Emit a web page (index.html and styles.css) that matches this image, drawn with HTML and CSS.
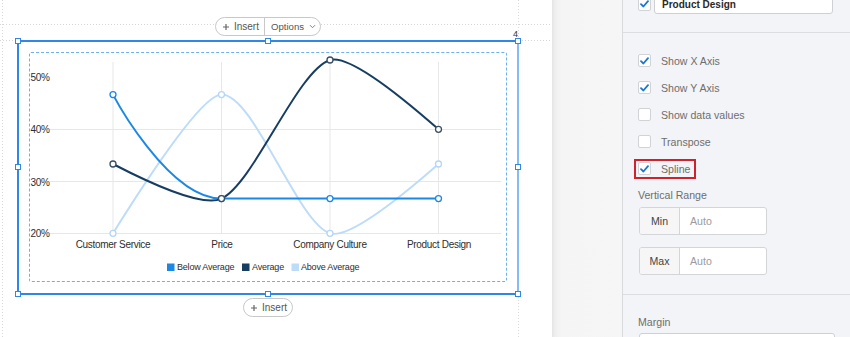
FILE: index.html
```html
<!DOCTYPE html>
<html>
<head>
<meta charset="utf-8">
<title>Chart editor</title>
<link rel="stylesheet" href="styles.css">
</head>
<body>
<div class="app">
  <main class="canvas">
    <div class="pill-row pill-row-top">
      <div class="pill">
        <span class="pill-seg"><svg class="plus" width="6" height="6" viewBox="0 0 6 6"><path d="M3 0v6M0 3h6"/></svg>Insert</span>
        <span class="pill-seg pill-seg-split">Options<svg class="chev" width="7" height="5" viewBox="0 0 7 5"><path d="M1 1.2l2.5 2.5 2.5-2.5"/></svg></span>
      </div>
    </div>
    <div class="selection">
      <span class="handle h-tl"></span><span class="handle h-tc"></span><span class="handle h-tr"></span>
      <span class="handle h-ml"></span><span class="handle h-mr"></span>
      <span class="handle h-bl"></span><span class="handle h-bc"></span><span class="handle h-br"></span>
      <span class="qnum">4</span>
      <div class="chart-box">
        <svg class="chart" width="476" height="228" viewBox="30 53 476 228">
          <g class="grid">
            <line x1="113" y1="62" x2="113" y2="233.5"/>
            <line x1="221.5" y1="62" x2="221.5" y2="233.5"/>
            <line x1="330" y1="62" x2="330" y2="233.5"/>
            <line x1="438.5" y1="62" x2="438.5" y2="233.5"/>
            <line x1="50" y1="129.5" x2="501" y2="129.5"/>
            <line x1="50" y1="181.5" x2="501" y2="181.5"/>
            <line x1="50" y1="233.5" x2="501" y2="233.5"/>
          </g>
          <g class="ylab">
            <text x="49.5" y="80.6">50%</text>
            <text x="49.5" y="132.6">40%</text>
            <text x="49.5" y="185.6">30%</text>
            <text x="49.5" y="237">20%</text>
          </g>
          <g class="xlab">
            <text x="113" y="247.6">Customer Service</text>
            <text x="222" y="247.6">Price</text>
            <text x="330" y="247.6">Company Culture</text>
            <text x="439" y="247.6">Product Design</text>
          </g>
          <path class="s-above" d="M113,233.3 Q199.8,94.6 221.5,94.6 C254.05,94.6 297.45,222.9 330,233.3 Q351.7,240.2 438.5,164"/>
          <path class="s-below" d="M113,94.6 C113,94.6 168,198.6 221.5,198.6 C264.9,198.6 286.6,198.6 330,198.6 C373.4,198.6 438.5,198.6 438.5,198.6"/>
          <path class="s-avg" d="M113,164 Q199.8,209 221.5,198.6 C254.05,183 297.45,70.4 330,60 Q351.7,53.07 438.5,129.3"/>
          <g class="m-above">
            <circle cx="113" cy="233.3" r="3"/><circle cx="221.5" cy="94.6" r="3"/><circle cx="330" cy="233.3" r="3"/><circle cx="438.5" cy="164" r="3"/>
          </g>
          <g class="m-below">
            <circle cx="113" cy="94.6" r="3"/><circle cx="221.5" cy="198.6" r="3"/><circle cx="330" cy="198.6" r="3"/><circle cx="438.5" cy="198.6" r="3"/>
          </g>
          <g class="m-avg">
            <circle cx="113" cy="164" r="3"/><circle cx="221.5" cy="198.6" r="3"/><circle cx="330" cy="60" r="3"/><circle cx="438.5" cy="129.3" r="3"/>
          </g>
          <g class="legend">
            <rect class="sw-below" x="167" y="263.5" width="7.5" height="7.5"/>
            <text x="177" y="270.4">Below Average</text>
            <rect class="sw-avg" x="242" y="263.5" width="7.5" height="7.5"/>
            <text x="252" y="270.4">Average</text>
            <rect class="sw-above" x="291.5" y="263.5" width="7.5" height="7.5"/>
            <text x="301" y="270.4">Above Average</text>
          </g>
        </svg>
      </div>
    </div>
    <div class="pill-row pill-row-bottom">
      <div class="pill">
        <span class="pill-seg pill-seg-solo"><svg class="plus" width="6" height="6" viewBox="0 0 6 6"><path d="M3 0v6M0 3h6"/></svg>Insert</span>
      </div>
    </div>
  </main>

  <aside class="panel">
    <div class="strip"></div>
    <div class="content">
      <section class="sec sec-top">
        <div class="choice-row">
          <span class="cb cb-on"><svg width="9" height="8" viewBox="0 0 9 8"><path d="M1 4.2l2.4 2.3L8 1.2"/></svg></span>
          <div class="text-input text-input-strong">Product Design</div>
        </div>
      </section>
      <section class="sec sec-opts">
        <label class="opt"><span class="cb cb-on"><svg width="9" height="8" viewBox="0 0 9 8"><path d="M1 4.2l2.4 2.3L8 1.2"/></svg></span><span class="opt-text">Show X Axis</span></label>
        <label class="opt"><span class="cb cb-on"><svg width="9" height="8" viewBox="0 0 9 8"><path d="M1 4.2l2.4 2.3L8 1.2"/></svg></span><span class="opt-text">Show Y Axis</span></label>
        <label class="opt"><span class="cb"></span><span class="opt-text">Show data values</span></label>
        <label class="opt"><span class="cb"></span><span class="opt-text">Transpose</span></label>
        <div class="opt"><span class="mark"><span class="cb cb-on"><svg width="9" height="8" viewBox="0 0 9 8"><path d="M1 4.2l2.4 2.3L8 1.2"/></svg></span><span class="opt-text">Spline</span></span></div>
        <div class="field-label">Vertical Range</div>
        <div class="addon-group"><span class="addon">Min</span><span class="addon-input">Auto</span></div>
        <div class="addon-group addon-group-2"><span class="addon">Max</span><span class="addon-input">Auto</span></div>
      </section>
      <section class="sec sec-margin">
        <div class="field-label">Margin</div>
        <div class="text-input text-input-wide"></div>
      </section>
    </div>
  </aside>
</div>
</body>
</html>
```

FILE: styles.css
```css
html, body {
  margin: 0;
  padding: 0;
}
body {
  width: 850px;
  height: 337px;
  overflow: hidden;
  font-family: "Liberation Sans", Arial, sans-serif;
  background: #ffffff;
}
.app {
  display: flex;
  height: 337px;
  overflow: hidden;
}

/* ---------- canvas ---------- */
.canvas {
  width: 552px;
  flex: none;
  display: flex;
  flex-direction: column;
  background:
    repeating-linear-gradient(to right, #d6d6d6 0 1px, transparent 1px 3px) 0 24px / 100% 1px no-repeat,
    repeating-linear-gradient(to right, #d6d6d6 0 1px, transparent 1px 3px) 0 40px / 100% 1px no-repeat,
    repeating-linear-gradient(to bottom, #d9d9d9 0 1px, transparent 1px 3px) 2px 0 / 1px 100% no-repeat,
    repeating-linear-gradient(to bottom, #d9d9d9 0 1px, transparent 1px 3px) 518px 0 / 1px 100% no-repeat,
    #ffffff;
}
.pill-row {
  width: 502px;
  margin-left: 17px;
  display: flex;
  justify-content: center;
}
.pill-row-top {
  height: 40px;
  padding-top: 17px;
  box-sizing: border-box;
}
.pill-row-bottom {
  margin-top: 3px;
}
.pill {
  display: flex;
  height: 19px;
  border: 1px solid #c8c8c8;
  border-radius: 10px;
  background: #ffffff;
  box-sizing: border-box;
  font-size: 10px;
  color: #555555;
  line-height: 17px;
}
.pill-seg {
  display: flex;
  align-items: center;
  padding: 0 5px 0 7px;
}
.pill-seg-split {
  border-left: 1px solid #c8c8c8;
  padding: 0 4px 0 6px;
  font-size: 9.6px;
}
.pill-seg-solo {
  padding: 0 5px 0 7px;
}
.plus {
  margin-right: 5px;
}
.plus path {
  stroke: #666666;
  stroke-width: 1.2;
  fill: none;
}
.chev {
  margin-left: 5px;
}
.chev path {
  stroke: #808080;
  stroke-width: 1;
  fill: none;
}

.selection {
  position: relative;
  width: 502px;
  height: 255px;
  margin-left: 17px;
  box-sizing: border-box;
  border: 2px solid #2f88e8;
  border-right-color: #84bcf3;
}
.handle {
  position: absolute;
  width: 6px;
  height: 6px;
  box-sizing: border-box;
  border: 1px solid #2f88e8;
  background: #ffffff;
}
.h-tl { left: -4px; top: -4px; }
.h-tc { left: 246px; top: -4px; }
.h-tr { right: -4px; top: -4px; }
.h-ml { left: -4px; top: 122px; }
.h-mr { right: -4px; top: 122px; }
.h-bl { left: -4px; bottom: -4px; }
.h-bc { left: 246px; bottom: -4px; }
.h-br { right: -4px; bottom: -4px; }
.qnum {
  position: absolute;
  right: -1px;
  top: -13px;
  font-size: 9px;
  color: #333333;
  line-height: 10px;
}

.chart-box {
  margin: 10px 10px 11px 10px;
  height: 230px;
  box-sizing: border-box;
  border: 1px dashed #6db0f0;
  border-radius: 2px;
}
.chart {
  display: block;
}
.grid line {
  stroke: #e7e7e7;
  stroke-width: 1;
}
.ylab text {
  font-size: 10px;
  fill: #2e2e2e;
  text-anchor: end;
  letter-spacing: -0.3px;
}
.xlab text {
  font-size: 10px;
  fill: #2e2e2e;
  text-anchor: middle;
  letter-spacing: -0.3px;
}
.s-below, .s-avg, .s-above {
  fill: none;
  stroke-width: 2;
  stroke-linecap: round;
}
.s-below { stroke: #1c88e6; }
.s-avg { stroke: #173d63; }
.s-above { stroke: #bddcf9; }
.m-below circle, .m-avg circle, .m-above circle {
  fill: #ffffff;
  stroke-width: 1.3;
}
.m-below circle { stroke: #1c88e6; }
.m-avg circle { stroke: #3b4f63; }
.m-above circle { stroke: #b4d6f7; }
.legend text {
  font-size: 9px;
  fill: #2e2e2e;
  letter-spacing: -0.2px;
}
.sw-below { fill: #1c88e6; }
.sw-avg { fill: #173d63; }
.sw-above { fill: #bddcf9; }

/* ---------- panel ---------- */
.panel {
  flex: 1;
  display: flex;
  background: #f3f4f7;
  overflow: hidden;
}
.strip {
  width: 70px;
  flex: none;
  background: linear-gradient(to right, #e4e4e4 0, #efefef 3px, #f5f5f5 9px, #f6f6f6 100%);
}
.content {
  flex: 1;
  height: 337px;
  overflow: hidden;
  border-left: 1px solid #d9dadd;
  background: #f3f4f7;
  font-size: 10.6px;
  color: #6e6e6e;
}
.sec {
  display: flow-root;
  padding-left: 15px;
  border-bottom: 1px solid #dcdde1;
}
.sec-margin {
  border-bottom: none;
}
.sec-top {
  height: 33px;
  box-sizing: border-box;
}
.choice-row {
  display: flex;
  align-items: center;
  gap: 3px;
  margin-top: -6px;
  height: 20px;
}
.text-input {
  box-sizing: border-box;
  background: #ffffff;
  border: 1px solid #cfd0d3;
  border-radius: 3px;
}
.text-input-strong {
  width: 179px;
  height: 20px;
  padding: 0 7px;
  line-height: 20px;
  font-weight: bold;
  font-size: 10px;
  color: #2a2a2a;
}
.cb {
  width: 13px;
  height: 13px;
  flex: none;
  box-sizing: border-box;
  border: 1px solid #d2d3d6;
  border-radius: 2px;
  background: #ffffff;
  display: flex;
  align-items: center;
  justify-content: center;
}
.cb svg path {
  fill: none;
  stroke: #1a78d4;
  stroke-width: 1.8;
  stroke-linecap: round;
  stroke-linejoin: round;
}
.sec-opts {
  padding-top: 14px;
  padding-bottom: 19px;
}
.opt {
  display: flex;
  align-items: center;
  height: 27px;
}
.opt-text {
  margin-left: 10px;
}
.mark {
  display: flex;
  align-items: center;
  height: 16px;
  padding: 0 4px 0 2px;
  margin-left: -2px;
  outline: 2px solid #d0222d;
}
.field-label {
  height: 14px;
  line-height: 14px;
  margin-top: 6px;
  color: #6e6e6e;
}
.addon-group {
  display: flex;
  width: 128px;
  height: 28px;
  margin-left: 1px;
  margin-top: 5px;
  box-sizing: border-box;
  border: 1px solid #d4d5d8;
  border-radius: 3px;
  background: #ffffff;
  overflow: hidden;
}
.addon-group-2 {
  margin-top: 12px;
}
.addon {
  width: 40px;
  flex: none;
  box-sizing: border-box;
  border-right: 1px solid #d4d5d8;
  background: #f6f6f6;
  color: #444444;
  display: flex;
  align-items: center;
  justify-content: center;
}
.addon-input {
  display: flex;
  align-items: center;
  padding-left: 10px;
  color: #9b9b9b;
}
.sec-margin {
  padding-top: 20px;
}
.sec-margin .field-label {
  margin-top: 0;
}
.text-input-wide {
  width: 196px;
  height: 24px;
  margin-left: 1px;
  margin-top: 4px;
}
```
